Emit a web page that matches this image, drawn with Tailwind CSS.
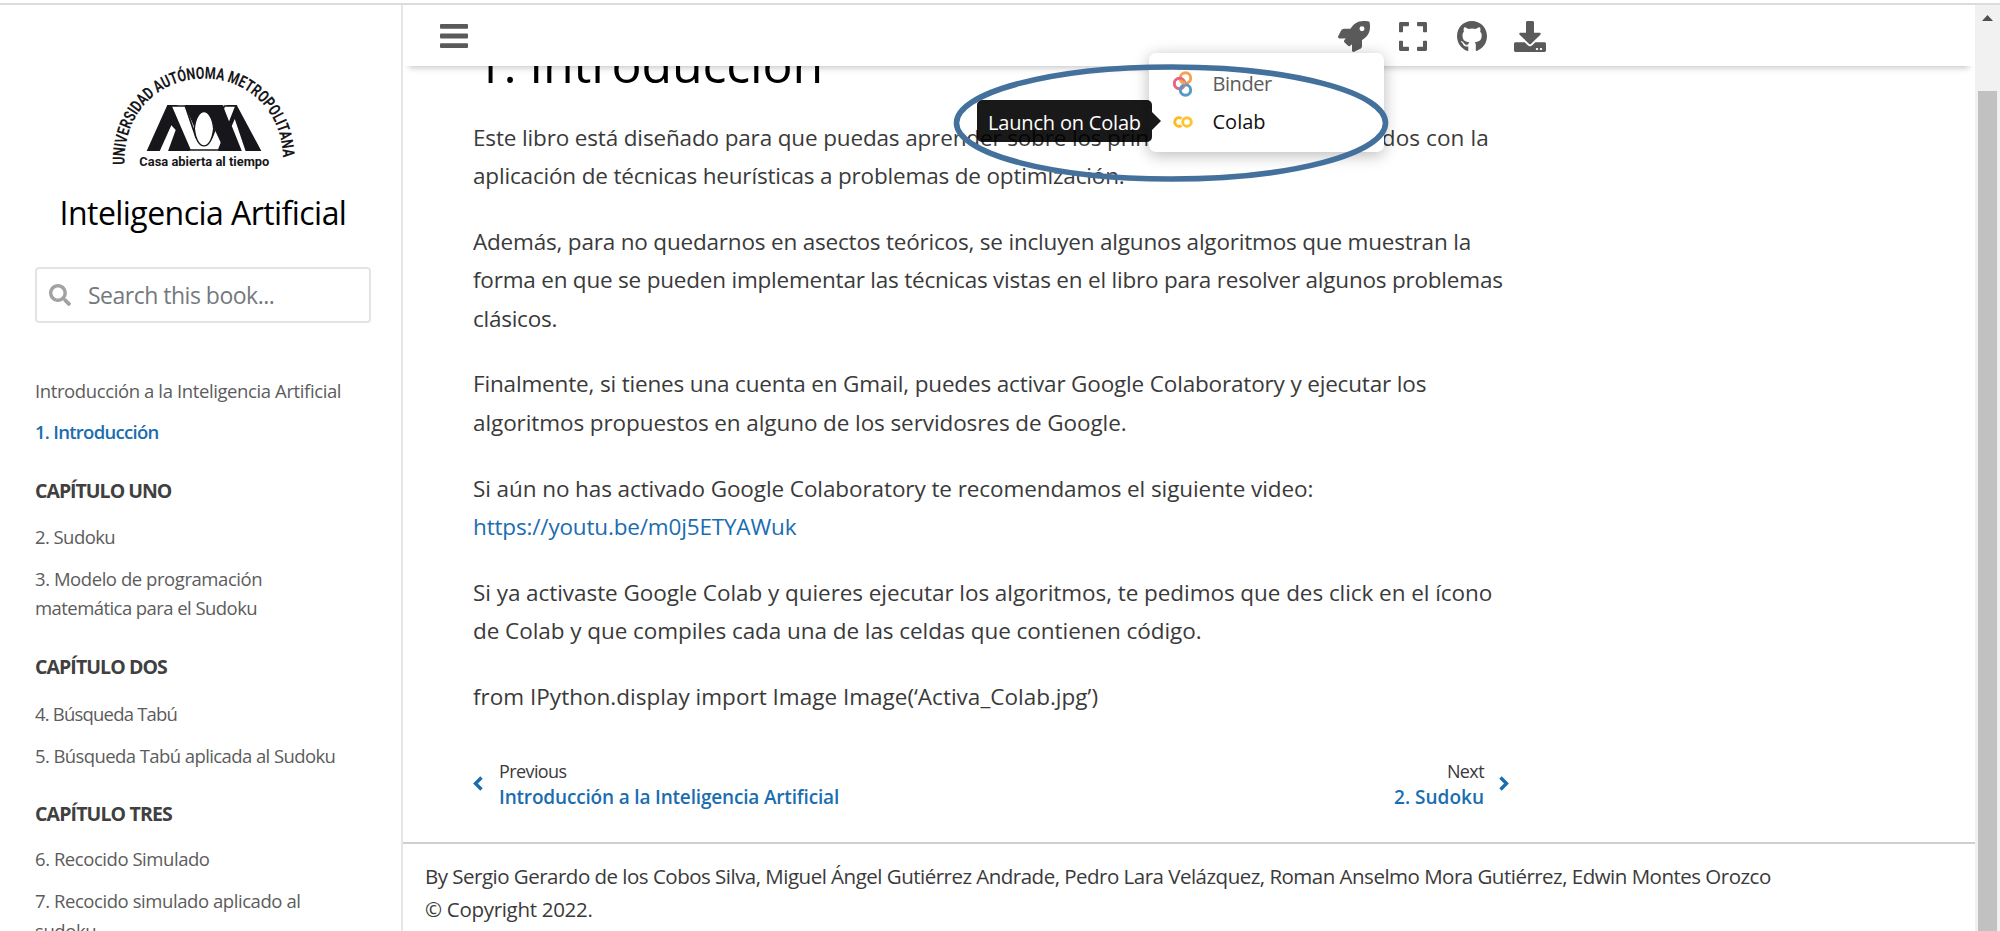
<!DOCTYPE html>
<html lang="es">
<head>
<meta charset="utf-8">
<title>1. Introducción — Inteligencia Artificial</title>
<script src="https://cdn.jsdelivr.net/npm/@tailwindcss/browser@4"></script>
</head>
<body class="h-screen overflow-hidden bg-white pt-[3px] font-['Open_Sans','Noto_Sans',sans-serif] text-[#3a3a3a]">
<div class="flex h-[928px] border-t-2 border-[#dcdcdc] whitespace-nowrap">

  <!-- Sidebar -->
  <aside class="flex h-full w-[403px] shrink-0 flex-col overflow-hidden border-r-2 border-[#e6e6e6] pr-[30px] pl-[35px] pt-[45px]">
    <svg class="ml-[55px] h-[140px] w-[230px] shrink-0" viewBox="0 0 690 420" fill="#17171b">
      <defs><path id="arc" d="M104 344C98 192 205 86 342 86C479 86 586 192 578 344"/></defs>
      <text class="font-['Roboto',sans-serif] font-bold" font-size="50"><textPath href="#arc" textLength="768" lengthAdjust="spacingAndGlyphs">UNIVERSIDAD AUTÓNOMA METROPOLITANA</textPath></text>
      <path d="M232 165H262L300 303H170Z"/>
      <path d="M440 165H410L385 303H514Z"/>
      <path d="M244 226L209 304H234L257 240Z" fill="#fff"/>
      <path d="M243 168H286L318 262Q342 308 366 262L403 168H438L386 300H300Z" fill="#fff" stroke="#17171b" stroke-width="5"/>
      <path d="M284 165H398L452 303H404L369 228C362 177 322 177 315 236Z"/>
      <path d="M313 236C320 168 364 168 371 236C364 305 320 305 313 236Z" fill="#fff" stroke="#17171b" stroke-width="4"/>
      <path d="M428 228L458 303H464L434 214Z" fill="#fff" stroke="#fff" stroke-width="5"/>
      <text class="font-['Roboto',sans-serif] font-bold" x="148" y="349" font-size="41" textLength="390" lengthAdjust="spacingAndGlyphs">Casa abierta al tiempo</text>
    </svg>
    <h2 class="text-center text-[32px] leading-[46px] tracking-[-0.55px] text-black">Inteligencia Artificial</h2>
    <div class="mt-[31px] flex h-[56px] shrink-0 items-center rounded-[4px] border-2 border-[#e4e4e4] pl-[12px]">
      <svg class="size-[22px]" viewBox="0 0 512 512" fill="#a2a2a2"><path d="M505 442.700L405.300 343c-4.500-4.500-10.600-7-17-7H372c27.600-35.300 44-79.700 44-128C416 93.100 322.900 0 208 0S0 93.100 0 208s93.100 208 208 208c48.300 0 92.700-16.400 128-44v16.300c0 6.400 2.500 12.500 7 17l99.700 99.700c9.400 9.400 24.600 9.400 33.900 0l28.300-28.300c9.400-9.400 9.400-24.600.1-34zM208 336c-70.700 0-128-57.200-128-128 0-70.700 57.200-128 128-128 70.700 0 128 57.200 128 128 0 70.700-57.200 128-128 128z"/></svg>
      <span class="ml-[17px] text-[23px] leading-[36px] tracking-[-0.5px] text-[#74797e]">Search this book...</span>
    </div>

    <nav class="mt-[52.500px] text-[18.5px] leading-[29.5px] tracking-[-0.5px] text-[#5c5c5c]">
      <a class="block tracking-[-0.39px]">Introducción a la Inteligencia Artificial</a>
      <a class="mt-[11.500px] block font-semibold tracking-[-0.72px] text-[#1a6db0]">1. Introducción</a>
      <p class="mt-[29.500px] text-[19.500px] font-bold tracking-[-1px] text-[#404040]">CAPÍTULO UNO</p>
      <a class="mt-[16.500px] block tracking-[-0.57px]">2. Sudoku</a>
      <a class="mt-[12.500px] block tracking-[-0.44px]">3. Modelo de programación<br><span class="tracking-[-0.56px]">matemática para el Sudoku</span></a>
      <p class="mt-[29.500px] text-[19.500px] font-bold tracking-[-0.92px] text-[#404040]">CAPÍTULO DOS</p>
      <a class="mt-[17px] block tracking-[-0.8px]">4. Búsqueda Tabú</a>
      <a class="mt-[12.500px] block tracking-[-0.59px]">5. Búsqueda Tabú aplicada al Sudoku</a>
      <p class="mt-[28.500px] text-[19.500px] font-bold tracking-[-0.86px] text-[#404040]">CAPÍTULO TRES</p>
      <a class="mt-[16px] block tracking-[-0.45px]">6. Recocido Simulado</a>
      <a class="mt-[12.500px] block tracking-[-0.43px]">7. Recocido simulado aplicado al<br>sudoku</a>
    </nav>
  </aside>

  <!-- Page -->
  <main class="relative flex h-full min-w-0 flex-1 flex-col">
    <header class="relative z-10 flex h-[61px] shrink-0 items-start bg-white pl-[37px] shadow-[0_8px_6px_-6px_rgba(0,0,0,0.22)]">
      <svg class="mt-[19px] h-[24px] w-[28px]" viewBox="0 0 28 24" fill="#5a5a5a"><rect width="28" height="4.800" rx="1"/><rect y="9.600" width="28" height="4.800" rx="1"/><rect y="19.200" width="28" height="4.800" rx="1"/></svg>
      <div class="ml-[870px] flex items-start">
        <svg class="mt-[15.500px] h-[31px] w-[32px]" viewBox="0 0 512 512" preserveAspectRatio="none" fill="#5a5a5a"><path d="M505.120 19.094c-1.190-5.531-6.658-11-12.207-12.188C460.716 0 435.507 0 410.407 0 307.175 0 245.269 55.203 199.052 128H94.838c-16.348.016-35.557 11.875-42.887 26.484L2.516 253.297A28.400 28.400 0 0 0 0 264a24 24 0 0 0 24.006 24h103.810l-22.474 22.469c-11.365 11.361-12.996 32.258 0 45.250l50.904 50.906c11.156 11.188 32.156 13.156 45.277 0l22.475-22.469V488a24 24 0 0 0 24.006 24 28.559 28.559 0 0 0 10.707-2.516l98.728-49.390c14.629-7.297 26.508-26.500 26.508-42.860V312.797c72.598-46.313 128.035-108.406 128.035-211.094.093-25.203.093-50.406-6.862-82.609zM384.040 168a40 40 0 1 1 40.010-40 40.023 40.023 0 0 1-40.010 40z"/></svg>
        <svg class="mt-[16.500px] ml-[28.500px] h-[29px] w-[28px]" viewBox="0 32 448 448" preserveAspectRatio="none" fill="#5a5a5a"><path d="M0 180V56c0-13.300 10.700-24 24-24h124c6.600 0 12 5.400 12 12v40c0 6.600-5.400 12-12 12H64v84c0 6.600-5.400 12-12 12H12c-6.600 0-12-5.400-12-12zM288 44v40c0 6.600 5.400 12 12 12h84v84c0 6.600 5.400 12 12 12h40c6.600 0 12-5.400 12-12V56c0-13.300-10.700-24-24-24H300c-6.600 0-12 5.400-12 12zm148 276h-40c-6.600 0-12 5.400-12 12v84h-84c-6.600 0-12 5.400-12 12v40c0 6.600 5.400 12 12 12h124c13.300 0 24-10.700 24-24V332c0-6.600-5.400-12-12-12zM160 468v-40c0-6.600-5.400-12-12-12H64v-84c0-6.600-5.400-12-12-12H12c-6.600 0-12 5.400-12 12v124c0 13.300 10.700 24 24 24h124c6.600 0 12-5.400 12-12z"/></svg>
        <svg class="mt-[15.500px] ml-[30px] h-[30px] w-[30px]" viewBox="0 8 496 484" preserveAspectRatio="none" fill="#5a5a5a"><path d="M165.900 397.400c0 2-2.300 3.600-5.200 3.600-3.300.3-5.600-1.300-5.600-3.600 0-2 2.300-3.600 5.200-3.600 3-.3 5.600 1.300 5.600 3.600zm-31.100-4.500c-.7 2 1.300 4.300 4.300 4.900 2.600 1 5.600 0 6.200-2s-1.300-4.300-4.300-5.200c-2.600-.7-5.500.3-6.200 2.300zm44.200-1.700c-2.900.7-4.900 2.600-4.600 4.900.3 2 2.900 3.300 5.900 2.600 2.900-.7 4.900-2.600 4.600-4.600-.3-1.900-3-3.200-5.900-2.900zM244.800 8C106.100 8 0 113.300 0 252c0 110.900 69.800 205.800 169.500 239.200 12.800 2.300 17.300-5.600 17.300-12.100 0-6.200-.3-40.400-.3-61.400 0 0-70 15-84.700-29.800 0 0-11.400-29.100-27.800-36.600 0 0-22.900-15.700 1.600-15.400 0 0 24.900 2 38.600 25.800 21.900 38.600 58.600 27.500 72.900 20.900 2.300-16 8.800-27.100 16-33.700-55.900-6.200-112.300-14.300-112.300-110.500 0-27.500 7.600-41.300 23.600-58.900-2.600-6.500-11.100-33.300 2.600-67.900 20.900-6.500 69 27 69 27 20-5.600 41.500-8.500 62.800-8.500s42.800 2.900 62.800 8.500c0 0 48.100-33.600 69-27 13.700 34.700 5.200 61.400 2.600 67.900 16 17.700 25.800 31.500 25.800 58.900 0 96.500-58.900 104.200-114.800 110.500 9.200 7.900 17 22.900 17 46.400 0 33.700-.3 75.400-.3 83.600 0 6.500 4.600 14.400 17.300 12.100C428.200 457.800 496 362.900 496 252 496 113.300 383.500 8 244.800 8z"/></svg>
        <svg class="mt-[15.500px] ml-[27.500px] h-[31px] w-[32px]" viewBox="0 0 512 512" preserveAspectRatio="none" fill="#5a5a5a"><path d="M216 0h80c13.300 0 24 10.700 24 24v168h87.700c17.800 0 26.700 21.500 14.100 34.100L269.700 378.300c-7.500 7.500-19.800 7.500-27.300 0L90.100 226.100c-12.600-12.600-3.700-34.100 14.100-34.100H192V24c0-13.300 10.700-24 24-24zm296 376v112c0 13.300-10.700 24-24 24H24c-13.300 0-24-10.700-24-24V376c0-13.300 10.700-24 24-24h146.700l49 49c20.100 20.100 52.500 20.100 72.600 0l49-49H488c13.300 0 24 10.700 24 24zm-124 88c0-11-9-20-20-20s-20 9-20 20 9 20 20 20 20-9 20-20zm64 0c0-11-9-20-20-20s-20 9-20 20 9 20 20 20 20-9 20-20z"/></svg>
      </div>
    </header>

    <article class="h-[776px] shrink-0 pl-[70px] text-[22.500px] leading-[38.600px]">
      <h1 class="mt-[-32px] pl-[2px] text-[50px] leading-[60px] tracking-[-0.15px] text-black">1. Introducción</h1>
      <div class="mt-[24.500px] flex flex-col gap-[27px]">
        <p><span class="tracking-[-0.15px]">Este libro está diseñado para que puedas aprender sobre los princip</span><span class="tracking-[-0.6px]">ios básicos relaciona</span><span class="tracking-[0.1px]">dos con la</span><br><span class="tracking-[-0.17px]">aplicación de técnicas heurísticas a problemas de optimización.</span></p>
        <p><span class="tracking-[-0.19px]">Además, para no quedarnos en asectos teóricos, se incluyen algunos algoritmos que muestran la</span><br><span class="tracking-[-0.21px]">forma en que se pueden implementar las técnicas vistas en el libro para resolver algunos problemas</span><br><span class="tracking-[-0.25px]">clásicos.</span></p>
        <p><span class="tracking-[-0.165px]">Finalmente, si tienes una cuenta en Gmail, puedes activar Google Colaboratory y ejecutar los</span><br><span class="tracking-[-0.09px]">algoritmos propuestos en alguno de los servidosres de Google.</span></p>
        <p><span class="tracking-[-0.09px]">Si aún no has activado Google Colaboratory te recomendamos el siguiente video:</span><br><a class="tracking-[-0.17px] text-[#1a6db0]">https://youtu.be/m0j5ETYAWuk</a></p>
        <p><span class="tracking-[-0.06px]">Si ya activaste Google Colab y quieres ejecutar los algoritmos, te pedimos que des click en el ícono</span><br><span class="tracking-[-0.06px]">de Colab y que compiles cada una de las celdas que contienen código.</span></p>
        <p class="tracking-[0.01px]">from IPython.display import Image Image(‘Activa_Colab.jpg’)</p>
      </div>
      <div class="mt-[41px] flex w-[1036px] items-center justify-between">
        <a class="flex items-center gap-[16px]">
          <svg class="h-[15px] w-[10px]" viewBox="0 0 10 15" fill="none" stroke="#1a6db0" stroke-width="3.400"><path d="M8.500 1.500L2.500 7.500L8.500 13.500"/></svg>
          <span class="flex flex-col leading-[26px]"><span class="text-[18px] tracking-[-0.6px]">Previous</span><span class="text-[19px] font-semibold tracking-[-0.17px] text-[#1a6db0]">Introducción a la Inteligencia Artificial</span></span>
        </a>
        <a class="flex items-center gap-[15px]">
          <span class="flex flex-col items-end leading-[26px]"><span class="text-[18px] tracking-[-0.6px]">Next</span><span class="text-[19px] font-semibold text-[#1a6db0]">2. Sudoku</span></span>
          <svg class="h-[15px] w-[10px]" viewBox="0 0 10 15" fill="none" stroke="#1a6db0" stroke-width="3.400"><path d="M1.500 1.500L7.500 7.500L1.500 13.500"/></svg>
        </a>
      </div>
    </article>

    <footer class="flex-1 border-t-2 border-[#cfcfcf] pt-[16px] pl-[22px] text-[20.500px] leading-[33px]">
      <p class="tracking-[-0.51px]">By Sergio Gerardo de los Cobos Silva, Miguel Ángel Gutiérrez Andrade, Pedro Lara Velázquez, Roman Anselmo Mora Gutiérrez, Edwin Montes Orozco</p>
      <p class="tracking-[-0.3px]">© Copyright 2022.</p>
    </footer>

    <!-- Launch menu -->
    <div class="absolute top-[48px] left-[746px] z-20 flex h-[99px] w-[235px] flex-col rounded-[7px] bg-white pt-[12px] pl-[23.500px] text-[20px] leading-[38px] shadow-[0_3px_16px_rgba(0,0,0,0.28)]">
      <div class="flex items-center gap-[20px] text-[#5c5c5c]">
        <svg class="h-[26px] w-[20px]" viewBox="0 0 20 26" fill="none" stroke-width="3"><circle cx="12.500" cy="7" r="5.200" stroke="#f5a252"/><circle cx="6.500" cy="12.500" r="5.200" stroke="#e66581"/><circle cx="12.500" cy="19" r="5.200" stroke="#579aca"/><path d="M7.500 9Q9 12 12.500 12.200" stroke="#f5a252"/></svg>
        <span class="tracking-[-0.45px]">Binder</span>
      </div>
      <div class="flex items-center gap-[20px] text-[#111]">
        <svg class="h-[12px] w-[20px]" viewBox="0 0 20 12" fill="none" stroke-width="2.900"><path d="M8.500 9.500A4.300 4.300 0 1 1 8.500 2.500" stroke="#fbbc1c"/><circle cx="14" cy="6" r="4.300" stroke="#fcc62e"/></svg>
        <span>Colab</span>
      </div>
    </div>

    <!-- Tooltip -->
    <div class="absolute top-[95px] left-[574px] z-30 flex items-center">
      <div class="h-[42px] w-[175px] rounded-[5px] bg-black/90 text-center text-[20px] leading-[45px] font-medium tracking-[-0.19px] text-white">Launch on Colab</div>
      <svg class="h-[18px] w-[9px]" viewBox="0 0 9 18" fill="#191919"><path d="M0 0L9 9L0 18Z"/></svg>
    </div>

    <!-- Highlight ellipse -->
    <svg class="absolute top-[59px] left-[550px] z-40 h-[118px] w-[436px]" viewBox="0 0 436 118" fill="none"><ellipse cx="218" cy="59" rx="214.500" ry="56" stroke="#44719c" stroke-width="5.600"/></svg>
  </main>

  <!-- Scrollbar -->
  <div class="flex h-full w-[25px] shrink-0 flex-col items-center bg-[#f1f1f1] pt-[10px]">
    <svg class="h-[6px] w-[11px]" viewBox="0 0 11 6" fill="#505050"><path d="M5.500 0L11 6H0Z"/></svg>
    <div class="mt-[70px] w-[19px] flex-1 bg-[#c1c1c1]"></div>
  </div>
</div>
</body>
</html>
